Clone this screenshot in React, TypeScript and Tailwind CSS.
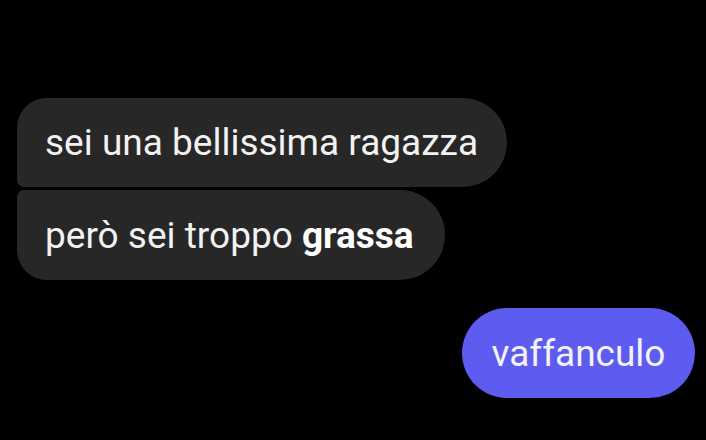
export default function App() {
  return (
    <div
      className="w-[706px] h-[440px] bg-black overflow-hidden flex flex-col pt-[98px] pl-[17px] pr-[11px]"
      style={{ fontFamily: "Roboto, 'Noto Sans', sans-serif" }}
    >
      <div className="self-start w-[490px] h-[89px] bg-[#272727] rounded-tl-[30px] rounded-tr-[45px] rounded-br-[45px] rounded-bl-[7px] flex items-center px-[28px]">
        <span className="text-[37px] text-[#f2f2f2] leading-none whitespace-nowrap">sei una bellissima ragazza</span>
      </div>
      <div className="self-start mt-[3px] w-[428px] h-[90px] bg-[#272727] rounded-tl-[7px] rounded-tr-[45px] rounded-br-[45px] rounded-bl-[30px] flex items-center px-[28px]">
        <span className="text-[37px] text-[#f2f2f2] leading-none whitespace-nowrap">
          però sei troppo <b className="font-bold text-white">grassa</b>
        </span>
      </div>
      <div className="self-end mt-[28px] w-[233px] h-[90px] bg-[#5d5bf0] rounded-full flex items-center justify-center">
        <span className="text-[37px] text-[#f2f2f8] leading-none whitespace-nowrap">vaffanculo</span>
      </div>
    </div>
  );
}
